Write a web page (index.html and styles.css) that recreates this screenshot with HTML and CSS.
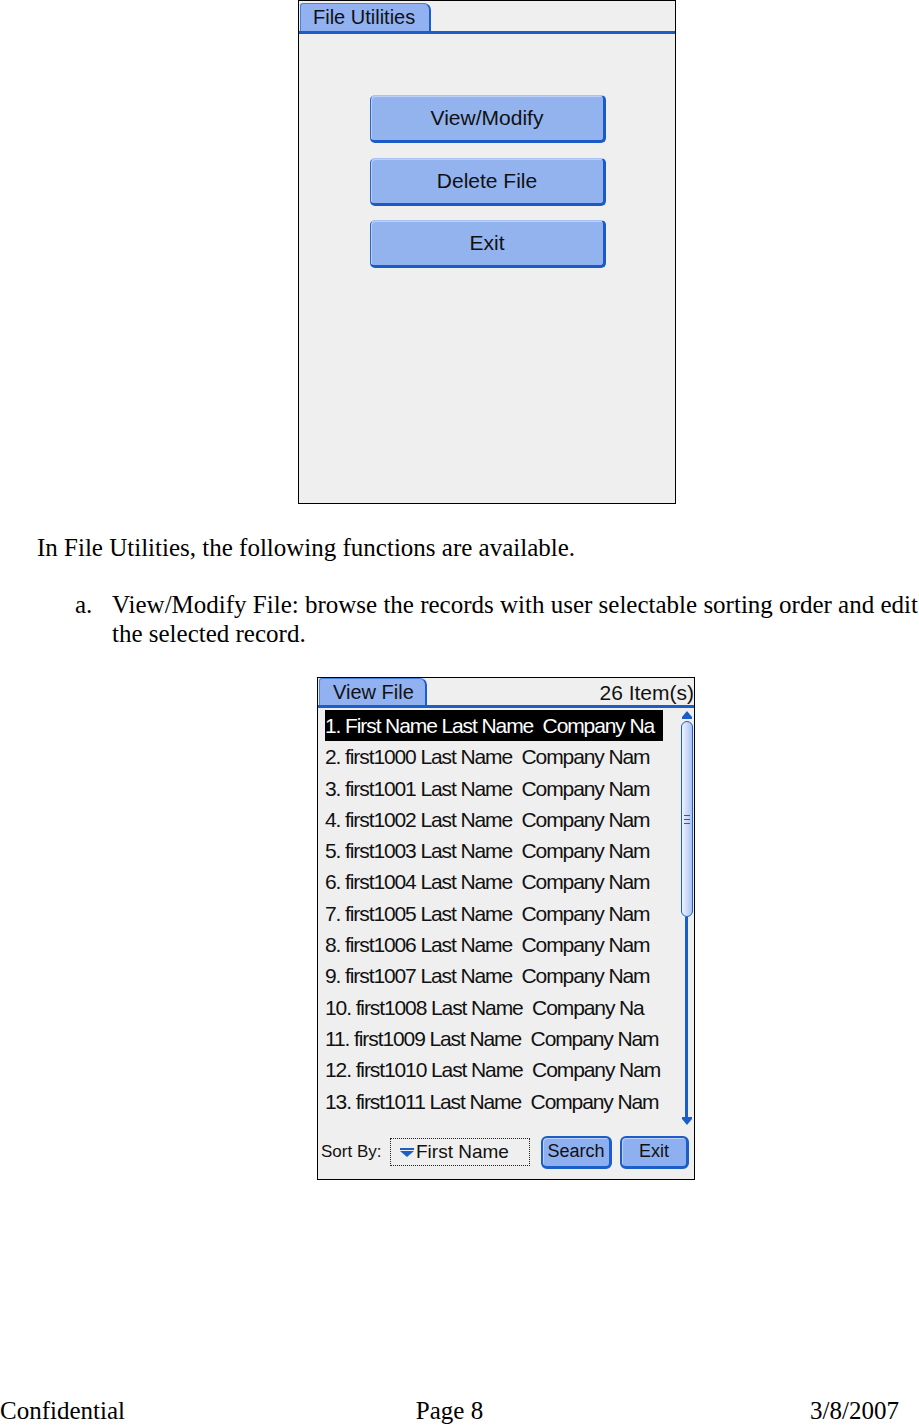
FILE: index.html
```html
<!DOCTYPE html>
<html lang="en">
<head>
  <meta charset="UTF-8">
  <title>File Utilities - Page 8</title>
  <link rel="stylesheet" href="styles.css">
</head>
<body>
  <main class="page">

    <!-- File Utilities screen -->
    <section class="device device-utils">
      <div class="device-head">
        <span class="tab">File Utilities</span>
      </div>
      <div class="menu">
        <button class="menu-btn">View/Modify</button>
        <button class="menu-btn">Delete File</button>
        <button class="menu-btn">Exit</button>
      </div>
    </section>

    <p class="intro">In File Utilities, the following functions are available.</p>

    <ol class="steps">
      <li>
        <span class="step-mark">a.</span>
        <span class="step-text">View/Modify File: browse the records with user selectable sorting order and edit<br>the selected record.</span>
      </li>
    </ol>

    <!-- View File screen -->
    <section class="device device-view">
      <div class="device-head">
        <span class="tab">View File</span>
        <span class="count">26 Item(s)</span>
      </div>

      <div class="list-wrap">
        <ul class="records">
          <li class="selected">1. First Name Last Name  Company Na</li>
          <li>2. first1000 Last Name  Company Nam</li>
          <li>3. first1001 Last Name  Company Nam</li>
          <li>4. first1002 Last Name  Company Nam</li>
          <li>5. first1003 Last Name  Company Nam</li>
          <li>6. first1004 Last Name  Company Nam</li>
          <li>7. first1005 Last Name  Company Nam</li>
          <li>8. first1006 Last Name  Company Nam</li>
          <li>9. first1007 Last Name  Company Nam</li>
          <li>10. first1008 Last Name  Company Na</li>
          <li>11. first1009 Last Name  Company Nam</li>
          <li>12. first1010 Last Name  Company Nam</li>
          <li>13. first1011 Last Name  Company Nam</li>
        </ul>

        <div class="scrollbar">
          <svg class="scroll-arrow" viewBox="0 0 10 8"><polygon points="5,0 10,6 0,6" fill="#1c5ec8"/><rect x="0" y="6" width="10" height="2" fill="#1c5ec8"/></svg>
          <div class="scroll-thumb"><span class="grip"></span></div>
          <div class="scroll-track"></div>
          <svg class="scroll-arrow" viewBox="0 0 10 8"><rect x="0" y="0" width="10" height="2" fill="#1c5ec8"/><polygon points="0,2 10,2 5,8" fill="#1c5ec8"/></svg>
        </div>
      </div>

      <div class="toolbar">
        <span class="sort-label">Sort By:</span>
        <div class="sort-select">
          <svg class="sort-caret" viewBox="0 0 14 9"><rect x="0" y="0" width="14" height="2" fill="#1c5ec8"/><polygon points="0,3 14,3 7,9" fill="#1c5ec8"/></svg>
          <span>First Name</span>
        </div>
        <button class="tool-btn">Search</button>
        <button class="tool-btn exit">Exit</button>
      </div>
    </section>

    <footer class="page-foot">
      <span>Confidential</span>
      <span>Page 8</span>
      <span class="foot-date">3/8/2007</span>
    </footer>
  </main>
</body>
</html>
```

FILE: styles.css
```css
/* General reset */
* {
  margin: 0;
  padding: 0;
  box-sizing: border-box;
}

body {
  font-family: "Liberation Serif", "Times New Roman", serif;
  color: #000;
  background: #fff;
}

.page {
  display: flex;
  flex-direction: column;
  min-height: 1425px;
}

/* Device screens */
.device {
  display: flex;
  flex-direction: column;
  width: 378px;
  background: #efefef;
  border: 1px solid #000;
  font-family: "Liberation Sans", Arial, sans-serif;
  color: #111;
}

.device-utils {
  margin-left: 298px;
  height: 504px;
}

.device-view {
  margin-left: 317px;
  margin-top: 29px;
  height: 503px;
}

.device-head {
  display: flex;
  align-items: flex-end;
  justify-content: space-between;
  height: 33px;
  padding-left: 1px;
  border-bottom: 3px solid #1c5ec8;
}

.device-view .device-head {
  height: 30px;
}

.tab {
  width: 131px;
  height: 28px;
  padding-left: 12px;
  background: #91b1f1;
  border: 1px solid #4a7fdc;
  border-right: 2px solid #1c5ec8;
  border-bottom: none;
  border-radius: 3px 7px 0 0;
  font-size: 20px;
  line-height: 27px;
}

.device-view .tab {
  width: 108px;
  height: 27px;
  padding-left: 13px;
  line-height: 26px;
}

.count {
  align-self: flex-start;
  margin-top: 2px;
  font-size: 21px;
  line-height: 26px;
}

/* Menu buttons */
.menu {
  display: flex;
  flex-direction: column;
  gap: 14.5px;
  padding: 61px 0 0 71px;
}

.menu-btn {
  width: 236px;
  height: 48px;
  font: 21px "Liberation Sans", Arial, sans-serif;
  color: #111;
  background: #93b3ef;
  border: 1px solid #2a66cf;
  border-top-color: #a9c2f4;
  border-right-width: 3px;
  border-bottom-width: 3px;
  border-right-color: #1a5bc6;
  border-bottom-color: #1a5bc6;
  border-radius: 5px;
  box-shadow: inset 1px 1px 0 #bcd0f8;
}

/* Document text */
.intro {
  margin: 29px 0 0 37px;
  font-size: 25px;
  line-height: 29px;
}

.steps {
  list-style: none;
  margin-top: 28px;
  font-size: 25px;
  line-height: 29px;
}

.steps li {
  display: flex;
}

.step-mark {
  flex: none;
  width: 112px;
  padding-left: 75px;
}

.step-text {
  white-space: nowrap;
}

/* Record list */
.list-wrap {
  display: flex;
  height: 417px;
  padding-top: 2px;
}

.records {
  list-style: none;
  width: 338px;
  margin-left: 7px;
  overflow: hidden;
}

.records li {
  height: 31.3px;
  font-size: 21px;
  line-height: 31px;
  letter-spacing: -1.1px;
  white-space: pre;
}

.records li.selected {
  background: #000;
  color: #fff;
}

.scrollbar {
  display: flex;
  flex-direction: column;
  align-items: center;
  width: 13px;
  height: 414px;
  margin: 1px 1px 0 auto;
}

.scroll-arrow {
  flex: none;
  width: 10px;
  height: 8px;
}

.scroll-thumb {
  display: flex;
  align-items: center;
  justify-content: center;
  flex: none;
  width: 12px;
  height: 196px;
  margin-top: 2px;
  border: 1px solid #1c5ec8;
  border-radius: 6px;
  background: linear-gradient(to right, #eef3fd, #a9c3f5);
}

.grip {
  width: 6px;
  height: 9px;
  background: repeating-linear-gradient(#1c5ec8 0 1px, transparent 1px 4px);
}

.scroll-track {
  flex: 1;
  width: 3px;
  background: #1c5ec8;
}

/* Bottom toolbar */
.toolbar {
  display: flex;
  align-items: center;
  height: 54px;
  padding-left: 3px;
  font-size: 17px;
}

.sort-label {
  width: 69px;
}

.sort-select {
  display: flex;
  align-items: center;
  gap: 2px;
  width: 140px;
  height: 28px;
  padding-left: 9px;
  border: 1px dotted #222;
  font-size: 19px;
}

.sort-caret {
  width: 14px;
  height: 9px;
}

.tool-btn {
  width: 71px;
  height: 33px;
  margin-left: 11px;
  font: 18px "Liberation Sans", Arial, sans-serif;
  color: #111;
  background: #8fb0f0;
  border: 2px solid #1c5ec8;
  border-right-width: 3px;
  border-bottom-width: 3px;
  border-radius: 6px;
  box-shadow: inset 1px 1px 0 #bcd0f8;
}

.tool-btn.exit {
  width: 69px;
  margin-left: 8px;
}

/* Page footer */
.page-foot {
  display: grid;
  grid-template-columns: 1fr auto 1fr;
  margin-top: auto;
  padding-right: 20px;
  font-size: 25px;
  line-height: 28px;
}

.foot-date {
  justify-self: end;
}
```
